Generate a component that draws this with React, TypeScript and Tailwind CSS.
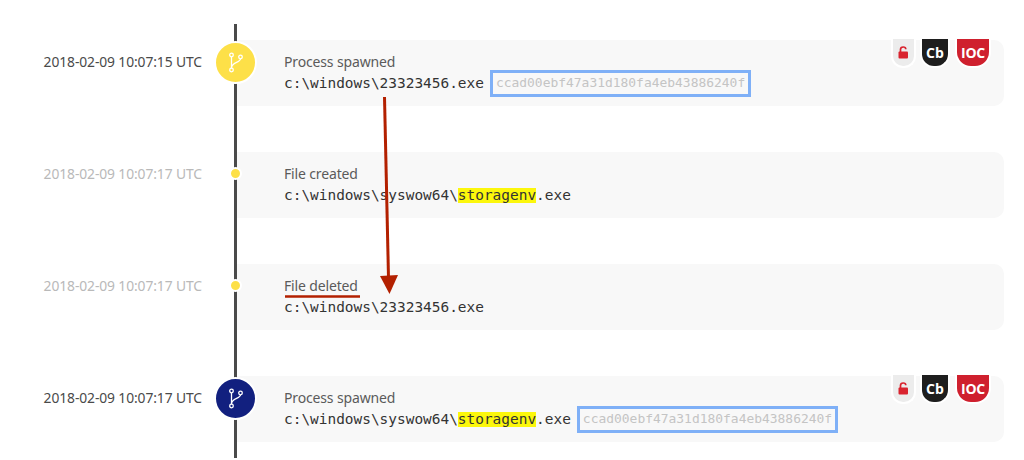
const HASH = "ccad00ebf47a31d180fa4eb43886240f";

type Row = {
  time: string;
  title: string;
  big?: "yellow" | "navy";
  faded?: boolean;
  pre: string;
  mark?: string;
  post?: string;
  hash?: boolean;
};

const rows: Row[] = [
  { time: "2018-02-09 10:07:15 UTC", title: "Process spawned", big: "yellow", pre: "c:\\windows\\23323456.exe", hash: true },
  { time: "2018-02-09 10:07:17 UTC", title: "File created", faded: true, pre: "c:\\windows\\syswow64\\", mark: "storagenv", post: ".exe" },
  { time: "2018-02-09 10:07:17 UTC", title: "File deleted", faded: true, pre: "c:\\windows\\23323456.exe" },
  { time: "2018-02-09 10:07:17 UTC", title: "Process spawned", big: "navy", pre: "c:\\windows\\syswow64\\", mark: "storagenv", post: ".exe", hash: true },
];

function BranchIcon({ color }: { color: string }) {
  return (
    <svg width="16" height="22" viewBox="0 0 16 22" fill="none" stroke="#fff" strokeWidth="1.3">
      <circle cx="3.5" cy="3" r="1.8" fill={color} />
      <circle cx="12.5" cy="5" r="1.8" fill={color} />
      <circle cx="3.5" cy="18" r="1.8" fill={color} />
      <path d="M3.5 4.8V16.2" />
      <path d="M12.5 6.8C12.5 10.5 3.8 10.5 3.5 15.5" />
    </svg>
  );
}

function Badges() {
  return (
    <div className="absolute top-[-1px] right-[13px] flex items-start text-white font-bold" style={{ fontFamily: "'Open Sans', sans-serif" }}>
      <div className="w-[25px] h-[29px] mr-[4px] rounded-b-[12px] bg-[#ececec] border-2 border-t-0 border-white flex items-center justify-center">
        <svg width="11" height="13" viewBox="0 0 11 13" fill="none">
          <path d="M2.5 6V3.6C2.5 2 3.6 1 5.2 1C6.8 1 7.8 2 7.8 3.2" stroke="#d9232e" strokeWidth="1.7" />
          <rect x="0.5" y="5.6" width="9.5" height="6.8" rx="1" fill="#d9232e" />
        </svg>
      </div>
      <div className="w-[30px] h-[29px] mr-[5px] rounded-b-[14px] bg-[#1e1e1e] border-2 border-t-0 border-white flex items-center justify-center text-[14px] leading-none">
        Cb
      </div>
      <div className="w-[36px] h-[29px] rounded-b-[16px] bg-[#cf202e] border-2 border-t-0 border-white flex items-center justify-center text-[14px] tracking-[-0.3px] leading-none">
        IOC
      </div>
    </div>
  );
}

export default function App() {
  return (
    <div className="relative w-[1024px] h-[460px] overflow-hidden bg-white pt-[40px] flex flex-col gap-[46px]" style={{ fontFamily: "'Noto Sans', sans-serif" }}>
      {/* timeline rail */}
      <div className="absolute left-[234px] top-[24px] w-[3px] h-[434px] bg-[#4a4a4a] z-10" />

      {rows.map((r, i) => (
        <div key={i} className="flex h-[66px] shrink-0">
          <div className={`w-[236px] pr-[34px] pt-[11px] text-right text-[13.85px] leading-[21px] tracking-[-0.1px] whitespace-nowrap ${r.faded ? "text-[#b9b9b9]" : "text-[#4a4a4a]"}`}>
            {r.time}
          </div>
          <div className="relative w-[768px] bg-[#f8f8f8] rounded-r-[10px] pl-[48px] pt-[12px]">
            {r.big ? (
              <div className={`absolute left-[-22px] top-[1px] z-20 w-[43px] h-[43px] rounded-full border-[2px] border-white flex items-center justify-center ${r.big === "yellow" ? "bg-[#fde048]" : "bg-[#12207f]"}`}>
                <BranchIcon color={r.big === "yellow" ? "#fde048" : "#12207f"} />
              </div>
            ) : (
              <div className="absolute left-[-7px] top-[15px] z-20 w-[13px] h-[13px] rounded-full border-[2px] border-white bg-[#fde048]" />
            )}
            <div className="text-[14px] leading-[19px] text-[#5b5b5b] tracking-[-0.15px]">{r.title}</div>
            <div className="flex items-center h-[25px] font-['DejaVu_Sans_Mono',monospace] text-[14.45px] text-[#333333] whitespace-pre">
              <span>{r.pre}</span>
              {r.mark && <span className="bg-[#fcf70c] h-[15px] leading-[15px]">{r.mark}</span>}
              {r.post && <span>{r.post}</span>}
              {r.hash && (
                <span className="ml-[6px] h-[27px] px-[3px] border-[3px] border-[#7fb0f7] text-[#c4c4c4] text-[12.95px] leading-[20px]">
                  {HASH}
                </span>
              )}
            </div>
            {r.hash && <Badges />}
          </div>
        </div>
      ))}

      {/* red annotation drawn over the screenshot */}
      <svg className="absolute left-0 top-0 z-30 pointer-events-none" width="1024" height="460" fill="none">
        <path d="M384.5 97L388.5 278" stroke="#b32000" strokeWidth="3" />
        <path d="M380 276L398 275L389.5 294Z" fill="#b32000" />
        <path d="M285 296.5H360" stroke="#b32000" strokeWidth="2.5" />
      </svg>
    </div>
  );
}
